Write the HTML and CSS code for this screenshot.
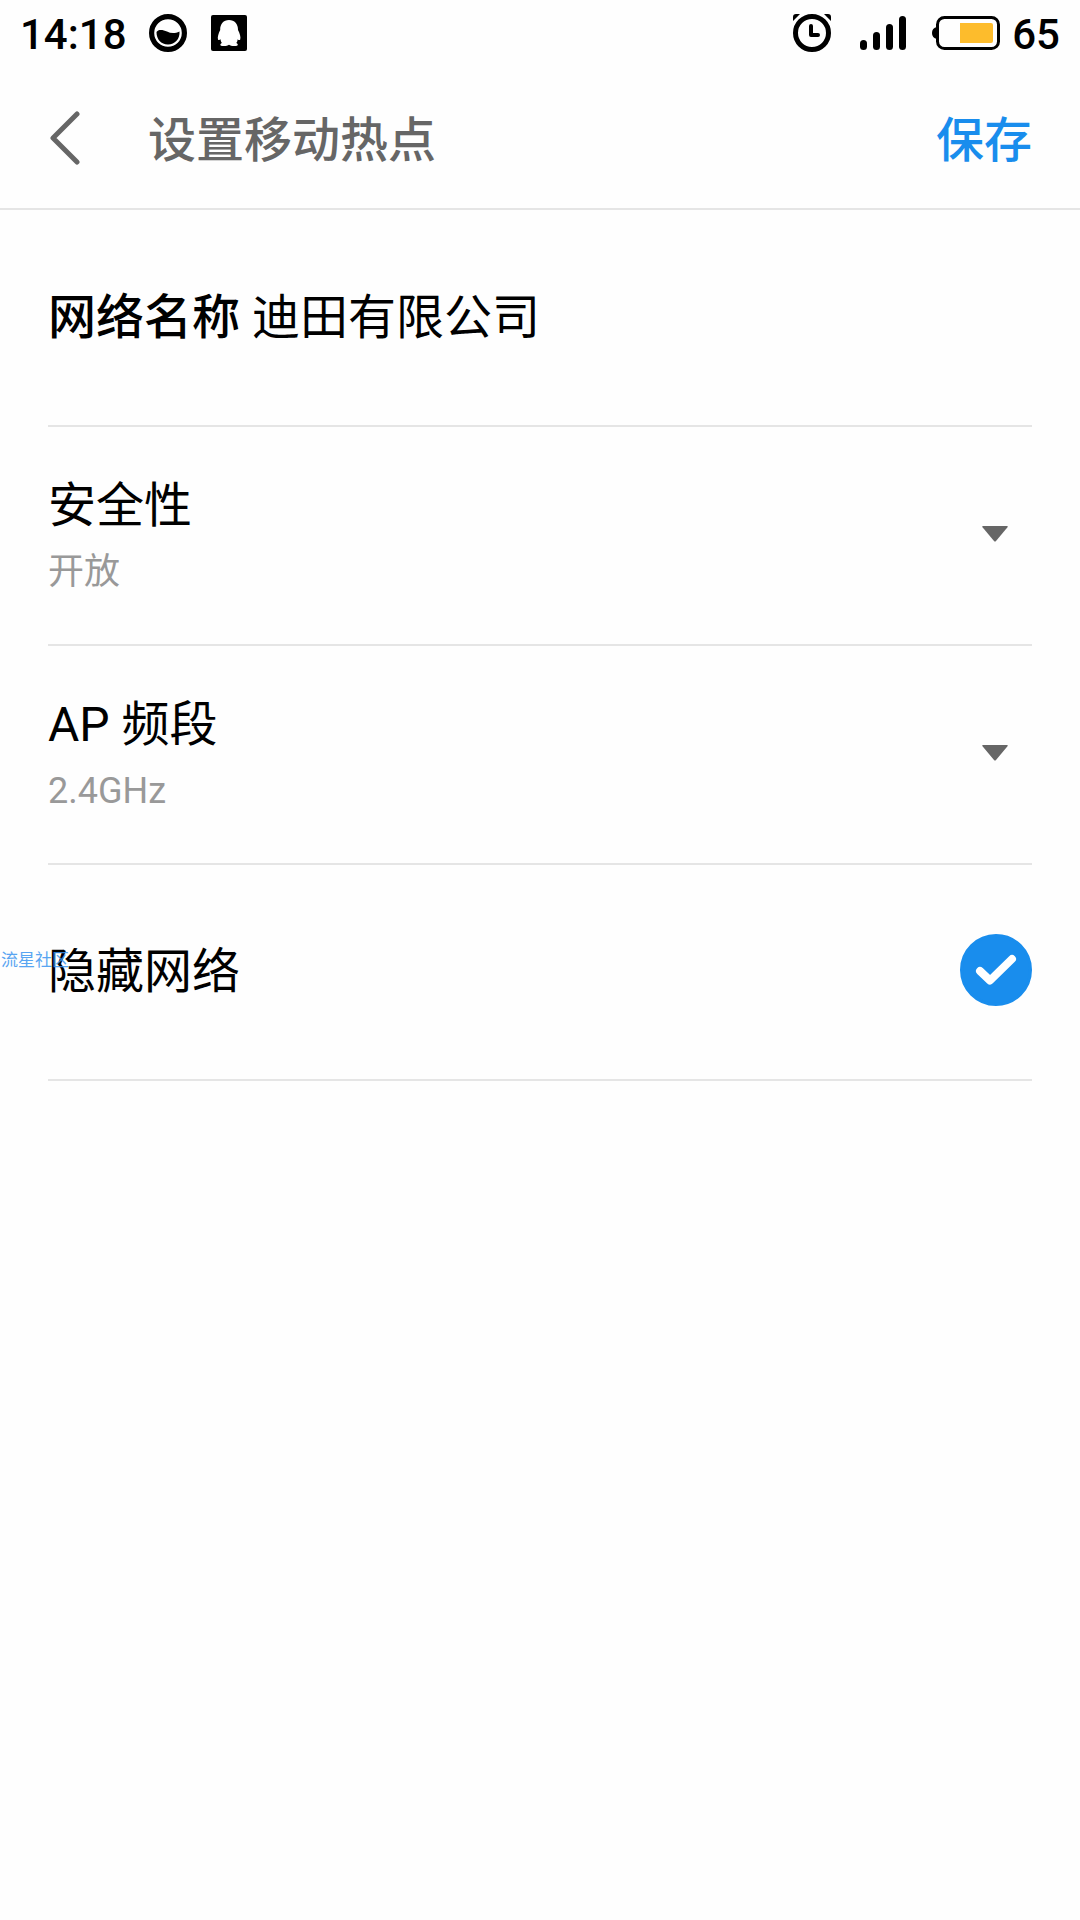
FILE: index.html
```html
<!DOCTYPE html>
<html lang="zh-CN">
<head>
<meta charset="utf-8">
<meta name="viewport" content="width=device-width, initial-scale=1">
<title>设置移动热点</title>
<link rel="stylesheet" href="styles.css">
</head>
<body>
<div class="status-bar">
  <div class="status-left">
    <span class="status-text">14:18</span>
    <svg class="icon-app" width="38" height="38" viewBox="0 0 38 38" aria-hidden="true">
      <circle cx="19" cy="19" r="16.4" fill="none" stroke="#000" stroke-width="5.2"/>
      <path d="M7.500 18C9 15 14 15.500 18 17.500C22 19.500 26 19.500 30.500 17.500C31 25 26 30.500 19 30.500C12 30.500 7.500 25.500 7.500 18Z" fill="#000"/>
    </svg>
    <svg width="36" height="36" viewBox="0 0 36 36" aria-hidden="true">
      <rect width="36" height="36" rx="2" fill="#000"/>
      <path d="M18 5C12.500 5 9 9 9.200 15C7.500 18.500 6.300 22 7 24.500C7.600 25.500 8.800 25 9.600 24.200C9.600 25.600 10 26.800 11 28C9 28.800 8.600 30.600 11 31C14 31.300 16.500 31 18 29.800C19.500 31 22 31.300 25 31C27.600 30.600 27.200 28.800 25.200 28C26.200 26.800 26.600 25.600 26.600 24.200C27.600 25.200 28.800 25.500 29.200 24.500C30 22 28.800 18.500 27 15C27.200 9 23.500 5 18 5Z" fill="#fff"/>
    </svg>
  </div>
  <div class="status-right">
    <svg class="icon-alarm" width="38" height="38" viewBox="0 0 38 38" aria-hidden="true">
      <circle cx="19" cy="19" r="16.500" fill="none" stroke="#000" stroke-width="5"/>
      <path d="M18 12V21H25" fill="none" stroke="#000" stroke-width="4" stroke-linecap="round" stroke-linejoin="round"/>
      <path d="M0 7V3Q0 0 3 0H7L0 7ZM38 7V3Q38 0 35 0H31L38 7Z" fill="#000"/>
    </svg>
    <svg class="icon-signal" width="46" height="34" viewBox="0 0 46 34" aria-hidden="true">
      <rect x="0" y="24" width="7" height="10" rx="3.500"/>
      <rect x="13" y="16" width="7" height="18" rx="3.500"/>
      <rect x="26" y="8" width="7" height="26" rx="3.500"/>
      <rect x="39" y="0" width="7" height="34" rx="3.500"/>
    </svg>
    <svg class="icon-battery" width="68" height="34" viewBox="0 0 68 34" aria-hidden="true">
      <path d="M5 11V23Q0 22 0 17T5 11Z" fill="#000"/>
      <rect x="5.500" y="1.500" width="61" height="31" rx="7" fill="none" stroke="#000" stroke-width="3"/>
      <path d="M28 7H59Q61 7 61 9V25Q61 27 59 27H28Z" fill="#fdbc2c"/>
    </svg>
    <span class="status-text">65</span>
  </div>
</div>

<header class="header">
  <button class="back" type="button" aria-label="返回">
    <svg width="30" height="54" viewBox="0 0 30 54" aria-hidden="true">
      <path d="M27 3L3 27L27 51" fill="none" stroke="#666" stroke-width="5" stroke-linecap="round" stroke-linejoin="round"/>
    </svg>
  </button>
  <h1 class="title">设置移动热点</h1>
  <button class="save" type="submit" form="hotspot">保存</button>
</header>

<form class="settings" id="hotspot">
  <div class="row row-name">
    <label class="name-label" for="ssid">网络名称</label>
    <input class="name-input" id="ssid" type="text" value="迪田有限公司">
  </div>
  <div class="row row-double">
    <div class="field">
      <label for="security">安全性</label>
      <select class="value" id="security"><option>开放</option></select>
    </div>
    <svg class="arrow" width="26" height="16" viewBox="0 0 26 16" aria-hidden="true"><path d="M1 0H25Q26.500 0 25.500 1.200L14 15Q13 16 12 15L.5 1.200Q-.5 0 1 0Z" fill="#666"/></svg>
  </div>
  <div class="row row-double">
    <div class="field">
      <label for="band">AP 频段</label>
      <select class="value" id="band"><option>2.4GHz</option></select>
    </div>
    <svg class="arrow" width="26" height="16" viewBox="0 0 26 16" aria-hidden="true"><path d="M1 0H25Q26.500 0 25.500 1.200L14 15Q13 16 12 15L.5 1.200Q-.5 0 1 0Z" fill="#666"/></svg>
  </div>
  <div class="row row-hide">
    <label class="hide-label" for="hidden">隐藏网络</label>
    <span class="check">
      <input class="check-input" id="hidden" type="checkbox" checked>
      <svg class="check-mark" width="72" height="72" viewBox="0 0 72 72" aria-hidden="true"><path d="M20 37L30 46.500L52 25" fill="none" stroke="#fff" stroke-width="8" stroke-linecap="round" stroke-linejoin="round"/></svg>
    </span>
    <span class="watermark">流星社区</span>
  </div>
</form>
</body>
</html>
```
FILE: styles.css
```css
* {
  box-sizing: border-box;
}

body {
  margin: 0;
  background: #fefefe;
  color: #000;
  font-family: Roboto, "Noto Sans CJK SC", sans-serif;
  font-size: 48px;
  line-height: 64px;
}

button,
input,
select {
  margin: 0;
  padding: 0;
  border: 0;
  background: none;
  font: inherit;
  color: inherit;
}

svg {
  display: block;
  flex: none;
}

.status-bar {
  display: flex;
  justify-content: space-between;
  align-items: center;
  height: 66px;
  padding: 0 20px;
}

.status-left,
.status-right {
  display: flex;
  align-items: center;
}

.status-text {
  padding-top: 4px;
  font-size: 42px;
  font-weight: 500;
  line-height: 62px;
}

.icon-app {
  margin: 0 24px 0 22px;
}

.icon-alarm {
  margin-right: 29px;
}

.icon-signal {
  margin-right: 26px;
}

.icon-battery {
  margin-right: 12px;
}

.header {
  display: flex;
  align-items: center;
  height: 144px;
  padding: 2px 48px 0;
  border-bottom: 2px solid #e5e5e5;
}

.back {
  width: 100px;
  padding-left: 2px;
}

.title {
  flex: 1;
  margin: 0;
  padding-top: 6px;
  color: #666;
  font-size: 48px;
  font-weight: 500;
}

.save {
  padding-top: 6px;
  color: #198ded;
  font-weight: 500;
}

.settings {
  padding: 0 48px;
}

.row {
  position: relative;
  display: flex;
  align-items: center;
  border-bottom: 2px solid #e5e5e5;
}

.row-name {
  align-items: baseline;
  padding: 66px 0 75px;
}

.row-double {
  padding: 47px 0 40px;
}

.row-hide {
  padding: 69px 0 73px;
}

.name-label {
  margin-right: 12px;
  font-weight: 500;
}

.name-input {
  flex: 1;
  min-width: 0;
  height: 74px;
}

.field {
  display: flex;
  flex: 1;
  flex-direction: column;
  gap: 2px;
}

.value {
  width: 100%;
  height: 64px;
  appearance: none;
  color: #999;
  font-size: 36px;
}

.arrow {
  position: absolute;
  top: 99px;
  right: 24px;
  pointer-events: none;
}

.hide-label {
  flex: 1;
  padding-top: 4px;
}

.check {
  position: relative;
}

.check-input {
  display: block;
  width: 72px;
  height: 72px;
  appearance: none;
  border: 3px solid #ccc;
  border-radius: 50%;
}

.check-input:checked {
  border-color: #198ded;
  background: #198ded;
}

.check-mark {
  position: absolute;
  top: 0;
  left: 0;
  pointer-events: none;
}

.watermark {
  position: absolute;
  top: 83px;
  left: -47px;
  color: #3c96f0;
  font-size: 17px;
  line-height: 24px;
  opacity: 0.85;
}
```
